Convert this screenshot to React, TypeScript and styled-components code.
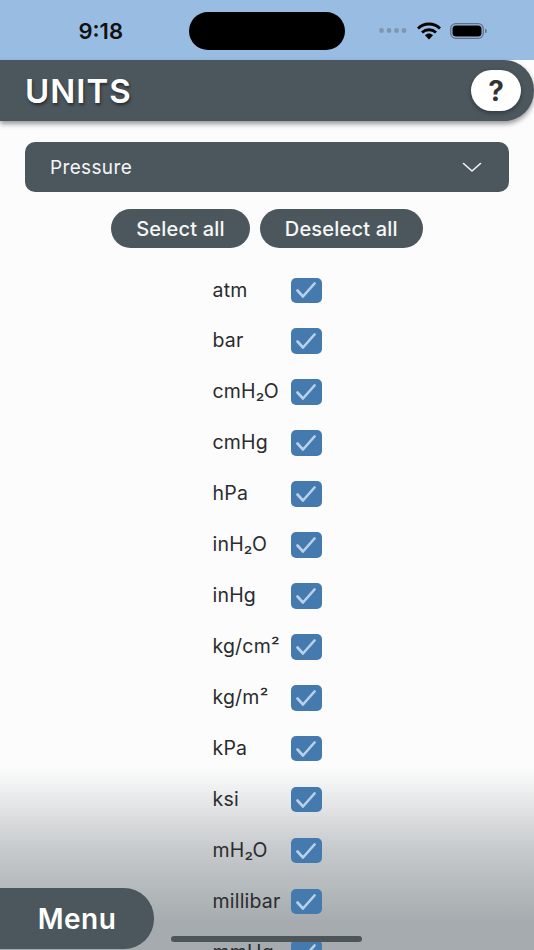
import React from 'react';
import styled, { createGlobalStyle } from 'styled-components';

const GlobalStyle = createGlobalStyle`
    html, body {
        margin: 0;
        padding: 0;
        background: #fcfcfc;
    }
    #root {
        height: 950px;
    }
    * {
        box-sizing: border-box;
    }
`;

const Screen = styled.div`
    position: relative;
    width: 534px;
    height: 950px;
    overflow: hidden;
    background: #fcfcfc;
    font-family: Inter, "Liberation Sans", sans-serif;
`;

const StatusBar = styled.div`
    height: 60px;
    background: #98bce2;
    display: grid;
    grid-template-columns: 189px 156px 1fr;
    align-items: center;
    padding-top: 1px;
`;

const Clock = styled.div`
    font-size: 22px;
    font-weight: 600;
    color: #111;
    text-align: right;
    padding-right: 66px;
`;

const Island = styled.div`
    height: 38px;
    background: #000;
    border-radius: 19px;
`;

const StatusIcons = styled.div`
    display: flex;
    align-items: center;
    padding-left: 34px;
`;

const Header = styled.header`
    position: relative;
    z-index: 1;
    height: 61px;
    background: #4b575d;
    border-radius: 0 30px 30px 0;
    box-shadow: 0 3px 5px rgba(0, 0, 0, 0.4);
    display: flex;
    align-items: center;
    justify-content: space-between;
    padding: 0 13px 0 25px;
`;

const Title = styled.h1`
    margin: 0;
    font-size: 33px;
    font-weight: 600;
    letter-spacing: 1px;
    color: #fff;
    text-shadow: 1px 2px 3px rgba(0, 0, 0, 0.5);
`;

const HelpButton = styled.button`
    width: 50px;
    height: 41px;
    border: none;
    border-radius: 21px;
    background: #fff;
    color: #333;
    font-family: inherit;
    font-size: 28px;
    font-weight: 700;
    padding: 0;
    box-shadow: 0 2px 4px rgba(0, 0, 0, 0.35);
`;

const Content = styled.main`
    position: relative;
    padding: 21px 25px 0;
    display: flex;
    flex-direction: column;
    align-items: stretch;
`;

const Dropdown = styled.div`
    height: 50px;
    background: #4b575d;
    border-radius: 10px;
    color: #f4f5f5;
    font-size: 19px;
    letter-spacing: 0.35px;
    display: flex;
    align-items: center;
    justify-content: space-between;
    padding: 0 27px 0 25px;
`;

const ButtonRow = styled.div`
    display: flex;
    justify-content: center;
    gap: 10px;
    margin-top: 17px;
`;

const PillButton = styled.button`
    height: 39px;
    padding: 0 25px;
    border: none;
    border-radius: 20px;
    background: #4b575d;
    color: #f6f7f7;
    font-family: inherit;
    font-size: 20px;
    font-weight: 500;
    letter-spacing: 0.2px;
`;

const UnitGrid = styled.div`
    display: grid;
    grid-template-columns: auto auto;
    justify-content: center;
    column-gap: 10px;
    row-gap: 25.45px;
    margin-top: 29.5px;
`;

const UnitLabel = styled.span`
    font-size: 19.5px;
    line-height: 25.5px;
    letter-spacing: 0.2px;
    color: #2a2c2e;
`;

const CheckBox = styled.span`
    width: 31px;
    height: 25.5px;
    border-radius: 5px;
    background: #457aae;
    display: flex;
    align-items: center;
    justify-content: center;
`;

const BottomFade = styled.div`
    position: absolute;
    left: 0;
    right: 0;
    bottom: 0;
    height: 182px;
    background: linear-gradient(to bottom, rgba(165, 171, 174, 0) 0%, rgba(165, 171, 174, 0.62) 45%, rgba(165, 171, 174, 1) 85%);
`;

const MenuButton = styled.button`
    position: absolute;
    left: 0;
    bottom: 1px;
    width: 154px;
    height: 61px;
    border: none;
    border-radius: 0 30px 30px 0;
    background: #4b575d;
    color: #fff;
    font-family: inherit;
    font-size: 28px;
    font-weight: 600;
    letter-spacing: 0.5px;
    padding: 1px 0 0;
`;

const HomeIndicator = styled.div`
    position: absolute;
    left: 171px;
    bottom: 8px;
    width: 191px;
    height: 6px;
    border-radius: 3px;
    background: #4d5559;
`;

const units = [
    'atm', 'bar', 'cmH₂O', 'cmHg', 'hPa', 'inH₂O', 'inHg', 'kg/cm²',
    'kg/m²', 'kPa', 'ksi', 'mH₂O', 'millibar', 'mmHg',
];

const Check = () => (
    <svg width="20" height="16" viewBox="0 0 20 16" fill="none">
        <path d="M1.5 8.5 L7 14.5 L18.5 1.5" stroke="#b9d1e8" strokeWidth="2.6" strokeLinecap="round" strokeLinejoin="round" />
    </svg>
);

const Wifi = () => (
    <svg width="24" height="18" viewBox="0 0 24 18" style={{ marginLeft: 10 }}>
        <path d="M1 6.5 C7 0.5 17 0.5 23 6.5" fill="none" stroke="#000" strokeWidth="2.8" />
        <path d="M5 10.5 C9 6.8 15 6.8 19 10.5" fill="none" stroke="#000" strokeWidth="2.8" />
        <path d="M8 13.2 C10.5 11 13.5 11 16 13.2 L12 17.5 Z" fill="#000" />
    </svg>
);

const Battery = () => (
    <svg width="38" height="16" viewBox="0 0 38 16" style={{ marginLeft: 9 }}>
        <rect x="0.7" y="0.7" width="32.6" height="14.6" rx="5" fill="none" stroke="#5f7183" strokeWidth="1.2" />
        <rect x="2.5" y="2.5" width="29" height="11" rx="3.5" fill="#000" />
        <rect x="35" y="6" width="1.6" height="4" rx="0.8" fill="#5f7183" />
    </svg>
);

const SignalDots = () => (
    <svg width="28" height="5" viewBox="0 0 28 5">
        {[2.5, 10, 17.5, 25].map(cx => <circle key={cx} cx={cx} cy="2.5" r="2.4" fill="#7d95ae" />)}
    </svg>
);

const Chevron = () => (
    <svg width="20" height="11" viewBox="0 0 20 11" fill="none">
        <path d="M1.5 1.5 L10 9 L18.5 1.5" stroke="#f4f5f5" strokeWidth="1.6" strokeLinecap="round" strokeLinejoin="round" />
    </svg>
);

export default function App() {
    return (
        <Screen>
            <GlobalStyle />
            <BottomFade />
            <StatusBar>
                <Clock>9:18</Clock>
                <Island />
                <StatusIcons>
                    <SignalDots />
                    <Wifi />
                    <Battery />
                </StatusIcons>
            </StatusBar>
            <Header>
                <Title>UNITS</Title>
                <HelpButton>?</HelpButton>
            </Header>
            <Content>
                <Dropdown>
                    Pressure
                    <Chevron />
                </Dropdown>
                <ButtonRow>
                    <PillButton>Select all</PillButton>
                    <PillButton>Deselect all</PillButton>
                </ButtonRow>
                <UnitGrid>
                    {units.map(unit => (
                        <React.Fragment key={unit}>
                            <UnitLabel>{unit}</UnitLabel>
                            <CheckBox><Check /></CheckBox>
                        </React.Fragment>
                    ))}
                </UnitGrid>
            </Content>
            <MenuButton>Menu</MenuButton>
            <HomeIndicator />
        </Screen>
    );
}
